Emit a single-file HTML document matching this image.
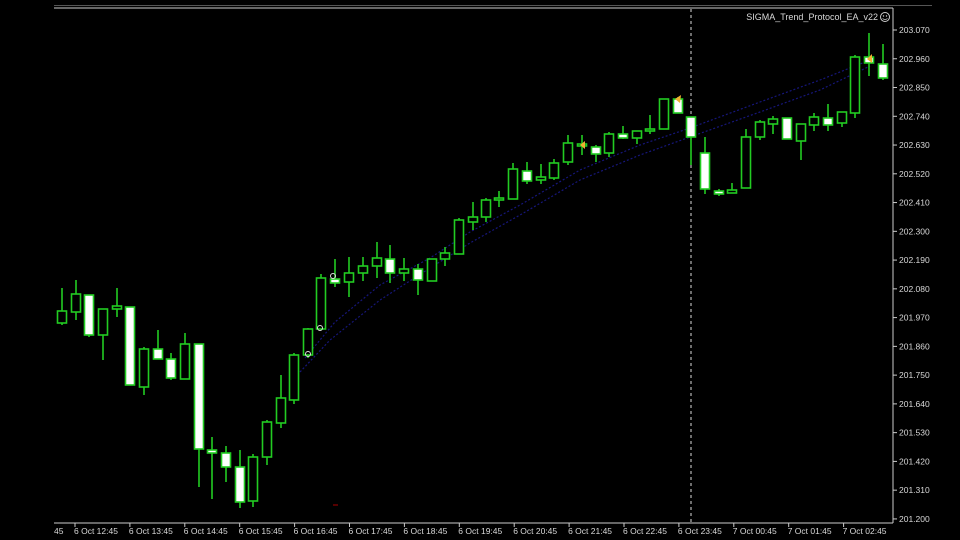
<!DOCTYPE html>
<html><head><meta charset="utf-8"><style>
html,body{margin:0;padding:0;background:#000;width:960px;height:540px;overflow:hidden}
svg{display:block}
text{font-family:"Liberation Sans",sans-serif;fill:#d8d8d8}
</style></head><body>
<svg width="960" height="540" viewBox="0 0 960 540" xmlns="http://www.w3.org/2000/svg">
<rect width="960" height="540" fill="#000"/>
<line x1="54" y1="5.5" x2="932" y2="5.5" stroke="#555" stroke-width="1"/>
<line x1="54" y1="8" x2="893" y2="8" stroke="#ccc" stroke-width="1"/>
<line x1="893" y1="8" x2="893" y2="523" stroke="#ccc" stroke-width="1"/>
<line x1="54" y1="523" x2="893" y2="523" stroke="#ccc" stroke-width="1"/>
<line x1="691" y1="9" x2="691" y2="522" stroke="#ddd" stroke-width="1" stroke-dasharray="3,3"/>
<polyline points="300,372 330,340 380,300 430,268 470,243 520,215 580,180 640,155 690,137 760,112 820,90 870,66" fill="none" stroke="#16167a" stroke-width="1.2" stroke-dasharray="2,2"/>
<polyline points="305,358 335,322 380,285 430,258 470,232 520,205 580,170 640,145 690,128 760,102 820,80 870,60" fill="none" stroke="#16167a" stroke-width="1.2" stroke-dasharray="2,2"/>
<g id="c" stroke="#22cc22" stroke-width="1.6"></g>
<text x="878" y="20" font-size="9" text-anchor="end">SIGMA_Trend_Protocol_EA_v22</text>
<circle cx="885" cy="17" r="4.5" fill="none" stroke="#ccc" stroke-width="1"/>
<circle cx="883.5" cy="16" r="0.7" fill="#ccc"/><circle cx="886.5" cy="16" r="0.7" fill="#ccc"/>
<path d="M882.5 18.5 Q885 20.5 887.5 18.5" fill="none" stroke="#ccc" stroke-width="0.8"/>
<g id="p"></g>
<g id="t"></g>
</svg>
<script>
var d=[[62,311,323,288,325,0],[76,294,312,280,320,0],[89,295,335,295,337,1],[103,309,335,309,360,0],[117,306,309,288,317,0],[130,307,385,307,385,1],[144,349,387,347,395,0],[158,349,359,330,359,1],[171,359,378,353,380,1],[185,344,379,333,379,0],[199,344,449,344,487,1],[212,450,453,437,499,1],[226,453,467,446,482,1],[240,467,502,450,508,1],[253,457,501,454,507,0],[267,422,457,420,465,0],[281,398,423,375,428,0],[294,355,400,353,404,0],[308,329,355,328,358,0],[321,278,329,274,330,0],[335,279,283,259,287,1],[349,273,282,257,297,0],[363,266,273,257,281,0],[377,258,266,242,278,0],[390,259,273,245,283,1],[404,269,273,258,281,0],[418,269,280,264,295,1],[432,259,281,259,281,0],[445,253,259,247,266,0],[459,220,254,218,254,0],[473,217,222,202,230,0],[486,200,217,198,222,0],[499,198,200,191,207,0],[513,169,199,163,199,0],[527,171,181,162,184,1],[541,177,180,164,184,0],[554,163,178,159,180,0],[568,143,162,135,165,0],[582,144,146,135,155,0],[596,147,154,145,162,1],[609,134,153,132,157,0],[623,134,138,126,139,1],[637,131,138,131,144,0],[650,129,131,115,134,0],[664,99,129,99,129,0],[678,99,113,97,113,1],[691,117,137,117,165,1],[705,153,189,137,194,1],[719,191,194,189,196,1],[732,190,193,183,193,0],[746,137,188,129,188,0],[760,122,137,120,140,0],[773,119,124,116,134,0],[787,118,139,118,139,1],[801,124,141,124,160,0],[814,117,125,113,131,0],[828,118,125,104,131,1],[842,112,123,112,127,0],[855,57,113,55,118,0],[869,57,63,33,76,1],[883,64,78,44,80,1]];
var g=document.getElementById("c"),s="";
d.forEach(function(c){var x=c[0];s+='<line x1="'+x+'" y1="'+c[3]+'" x2="'+x+'" y2="'+c[4]+'"/>';var h=Math.max(c[2]-c[1],1.5);s+='<rect x="'+(x-4.5)+'" y="'+c[1]+'" width="9" height="'+h+'" fill="'+(c[5]?'#fff':'#000')+'"/>';});
g.innerHTML=s;
var p="";for(var i=0;i<18;i++){var y=30+i*28.76;var v=(203.07-i*0.11).toFixed(3);p+='<line x1="893" y1="'+y+'" x2="897" y2="'+y+'" stroke="#ccc"/><text x="899" y="'+(y+3)+'" font-size="8.5">'+v+'</text>';}
document.getElementById("p").innerHTML=p;
var lb=["6 Oct 12:45","6 Oct 13:45","6 Oct 14:45","6 Oct 15:45","6 Oct 16:45","6 Oct 17:45","6 Oct 18:45","6 Oct 19:45","6 Oct 20:45","6 Oct 21:45","6 Oct 22:45","6 Oct 23:45","7 Oct 00:45","7 Oct 01:45","7 Oct 02:45"];
var t='<text x="54" y="534" font-size="8.5">45</text>';lb.forEach(function(l,i){var x=75+i*54.9;t+='<line x1="'+x+'" y1="523" x2="'+x+'" y2="527" stroke="#ccc"/><text x="'+(x-1)+'" y="534" font-size="8.5">'+l+'</text>';});
document.getElementById("t").innerHTML=t;
</script>
<svg style="position:absolute;left:0;top:0" width="960" height="540">
<path d="M580 145 L585 141 L585 149Z" fill="#f0b030"/>
<path d="M675 99 L681 95 L680 103Z" fill="#f0b030"/>
<path d="M867 59 L872 54 L872 63Z" fill="#f0b030"/>
<circle cx="308" cy="354" r="2.5" fill="none" stroke="#ddd"/>
<circle cx="320" cy="328" r="2.5" fill="none" stroke="#ddd"/>
<circle cx="333" cy="276" r="2.5" fill="none" stroke="#ddd"/>
<line x1="333" y1="505" x2="338" y2="505" stroke="#a00"/>
</svg>
</body></html>
